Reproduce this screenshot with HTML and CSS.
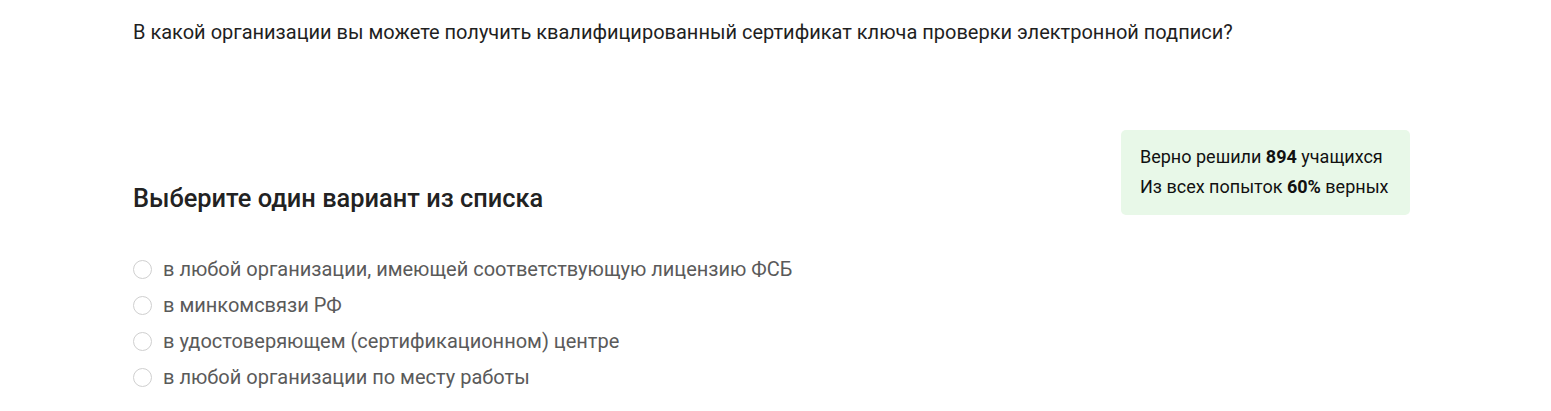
FILE: index.html
```html
<!DOCTYPE html>
<html lang="ru">
<head>
<meta charset="utf-8">
<link rel="stylesheet" href="styles.css">
</head>
<body>
<div class="page">
  <p class="question">В какой организации вы можете получить квалифицированный сертификат ключа проверки электронной подписи?</p>
  <div class="main">
    <div class="left">
      <h2 class="title">Выберите один вариант из списка</h2>
      <ul class="options">
        <li class="option"><span class="radio"></span>в любой организации, имеющей соответствующую лицензию ФСБ</li>
        <li class="option"><span class="radio"></span>в минкомсвязи РФ</li>
        <li class="option"><span class="radio"></span>в удостоверяющем (сертификационном) центре</li>
        <li class="option"><span class="radio"></span>в любой организации по месту работы</li>
      </ul>
    </div>
    <div class="stats">
      <div>Верно решили <b>894</b> учащихся</div>
      <div>Из всех попыток <b>60%</b> верных</div>
    </div>
  </div>
</div>
</body>
</html>
```
FILE: styles.css
```css
html, body {
  margin: 0;
  padding: 0;
  background: #fff;
}
body {
  font-family: Roboto, "Liberation Sans", Arial, sans-serif;
  color: #222;
}
.page {
  width: 1277px;
  margin-left: 133px;
  padding-top: 20px;
}
.question {
  margin: 0;
  font-size: 20px;
  line-height: 24px;
  color: #1f1f1f;
}
.main {
  display: flex;
  justify-content: space-between;
  align-items: flex-start;
  margin-top: 86px;
}
.title {
  margin: 52px 0 0;
  font-size: 25.4px;
  line-height: 32px;
  font-weight: 500;
  color: #222;
}
.options {
  list-style: none;
  margin: 37px 0 0;
  padding: 0;
}
.option {
  display: flex;
  align-items: center;
  height: 36px;
  font-size: 20px;
  color: #5a5a5a;
}
.radio {
  width: 17px;
  height: 17px;
  border: 1px solid #cfcfcf;
  border-radius: 50%;
  margin-right: 11px;
  box-sizing: content-box;
  flex: none;
}
.stats {
  width: 251px;
  padding: 12px 19px 13px;
  background: #e8f8e8;
  border-radius: 5px;
  font-size: 18px;
  line-height: 30px;
  color: #111;
}
.stats b {
  font-weight: 700;
}
```
